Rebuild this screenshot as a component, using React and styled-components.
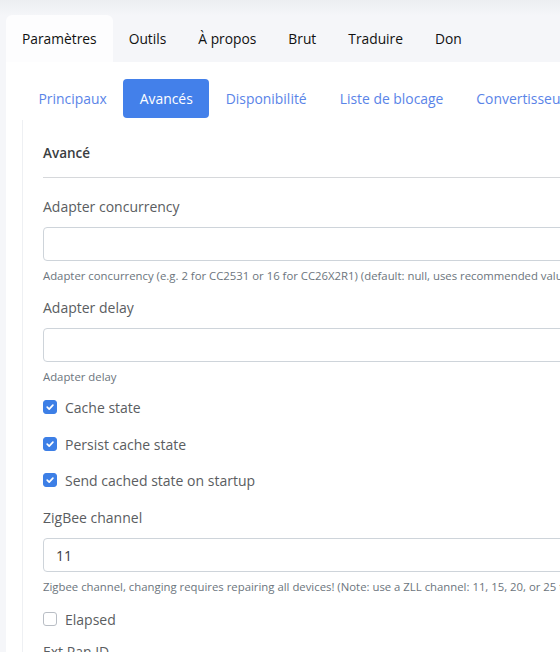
import React from "react";
import styled, { createGlobalStyle } from "styled-components";

const GlobalStyle = createGlobalStyle`
  html, body {
    margin: 0;
    padding: 0;
    overflow: hidden;
    background: #f5f6f9;
  }
  body {
    font-family: "Open Sans", "Noto Sans", sans-serif;
    color: #212529;
  }
`;

const Page = styled.div`
  width: 820px;
  min-height: 652px;
  background: linear-gradient(#eceef1 0px, #f5f6f9 16px);
  padding-left: 6px;
`;

const TopTabs = styled.nav`
  display: flex;
  padding-top: 15px;
  height: 47px;
`;

const TopTab = styled.div`
  padding: 0 16px;
  display: flex;
  align-items: center;
  font-size: 13.8px;
  color: #111;
  border-radius: 6px 6px 0 0;
  background: ${(p) => (p.$active ? "#fdfdfe" : "transparent")};
`;

const Body = styled.div`
  background: #fff;
  min-height: 600px;
  padding: 17px 0 0 16px;
`;

const SubTabs = styled.div`
  display: flex;
  height: 39px;
  white-space: nowrap;
`;

const SubTab = styled.div`
  padding: 0 16.5px;
  display: flex;
  align-items: center;
  font-size: 13.9px;
  border-radius: 4px;
  color: ${(p) => (p.$active ? "#fff" : "#5a84e8")};
  background: ${(p) => (p.$active ? "#4380ea" : "transparent")};
`;

const Card = styled.section`
  border-left: 1px solid #eef0f3;
  padding: 22px 0 0 20px;
  margin-top: 2px;
`;

const CardTitle = styled.h5`
  margin: 0;
  font-size: 13.5px;
  font-weight: 600;
  color: #3a3d41;
  line-height: 22px;
`;

const Divider = styled.hr`
  border: 0;
  border-top: 1px solid #d6d8db;
  margin: 13px 0 0;
`;

const Fields = styled.div`
  padding-top: 18px;
  display: flex;
  flex-direction: column;
`;

const Group = styled.div`
  margin-bottom: ${(p) => p.$mb ?? 12}px;
`;

const Label = styled.label`
  display: block;
  font-size: 14px;
  line-height: 22px;
  color: #5a5d61;
  margin-bottom: 9px;
`;

const Input = styled.input`
  display: block;
  box-sizing: border-box;
  width: 100%;
  height: 34px;
  border: 1px solid #ced4da;
  border-radius: 4px;
  padding: 0 12px;
  font-family: "Open Sans", "Noto Sans", sans-serif;
  font-size: 14px;
  color: #3a3d41;
  outline: none;
`;

const Help = styled.div`
  font-size: 11.35px;
  line-height: 18px;
  color: #6c757d;
  margin-top: 6px;
  white-space: nowrap;
`;

const CheckRow = styled.label`
  display: flex;
  align-items: center;
  gap: 8px;
  height: 24px;
  font-size: 14px;
  color: #5a5d61;
  margin-bottom: ${(p) => p.$mb ?? 13}px;
`;

const Box = styled.span`
  width: 14px;
  height: 14px;
  box-sizing: border-box;
  border-radius: 3px;
  display: inline-flex;
  align-items: center;
  justify-content: center;
  background: ${(p) => (p.$checked ? "#3d7fe6" : "#fff")};
  border: 1px solid ${(p) => (p.$checked ? "#3d7fe6" : "#b9bec5")};
`;

const Checkbox = ({ checked, label, mb }) => (
  <CheckRow $mb={mb}>
    <Box $checked={checked}>
      {checked && (
        <svg width="10" height="10" viewBox="0 0 10 10">
          <path d="M2.2 5.2 L4.2 7.1 L7.9 3.2" fill="none" stroke="#fff" strokeWidth="1.7" strokeLinecap="round" strokeLinejoin="round" />
        </svg>
      )}
    </Box>
    {label}
  </CheckRow>
);

const topTabs = ["Paramètres", "Outils", "À propos", "Brut", "Traduire", "Don"];
const subTabs = ["Principaux", "Avancés", "Disponibilité", "Liste de blocage", "Convertisseurs"];

export default function App() {
  return (
    <>
      <GlobalStyle />
      <Page>
        <TopTabs>
          {topTabs.map((t, i) => (
            <TopTab key={t} $active={i === 0}>{t}</TopTab>
          ))}
        </TopTabs>
        <Body>
          <SubTabs>
            {subTabs.map((t, i) => (
              <SubTab key={t} $active={i === 1}>{t}</SubTab>
            ))}
          </SubTabs>
          <Card>
            <CardTitle>Avancé</CardTitle>
            <Divider />
            <Fields>
              <Group $mb={12}>
                <Label>Adapter concurrency</Label>
                <Input />
                <Help>Adapter concurrency (e.g. 2 for CC2531 or 16 for CC26X2R1) (default: null, uses recommended value)</Help>
              </Group>
              <Group $mb={9}>
                <Label>Adapter delay</Label>
                <Input />
                <Help>Adapter delay</Help>
              </Group>
              <Checkbox checked label="Cache state" />
              <Checkbox checked label="Persist cache state" mb={12} />
              <Checkbox checked label="Send cached state on startup" mb={15} />
              <Group $mb={11}>
                <Label>ZigBee channel</Label>
                <Input defaultValue="11" />
                <Help>Zigbee channel, changing requires repairing all devices! (Note: use a ZLL channel: 11, 15, 20, or 25 to avoid problems)</Help>
              </Group>
              <Checkbox label="Elapsed" mb={10} />
              <Label>Ext Pan ID</Label>
            </Fields>
          </Card>
        </Body>
      </Page>
    </>
  );
}
